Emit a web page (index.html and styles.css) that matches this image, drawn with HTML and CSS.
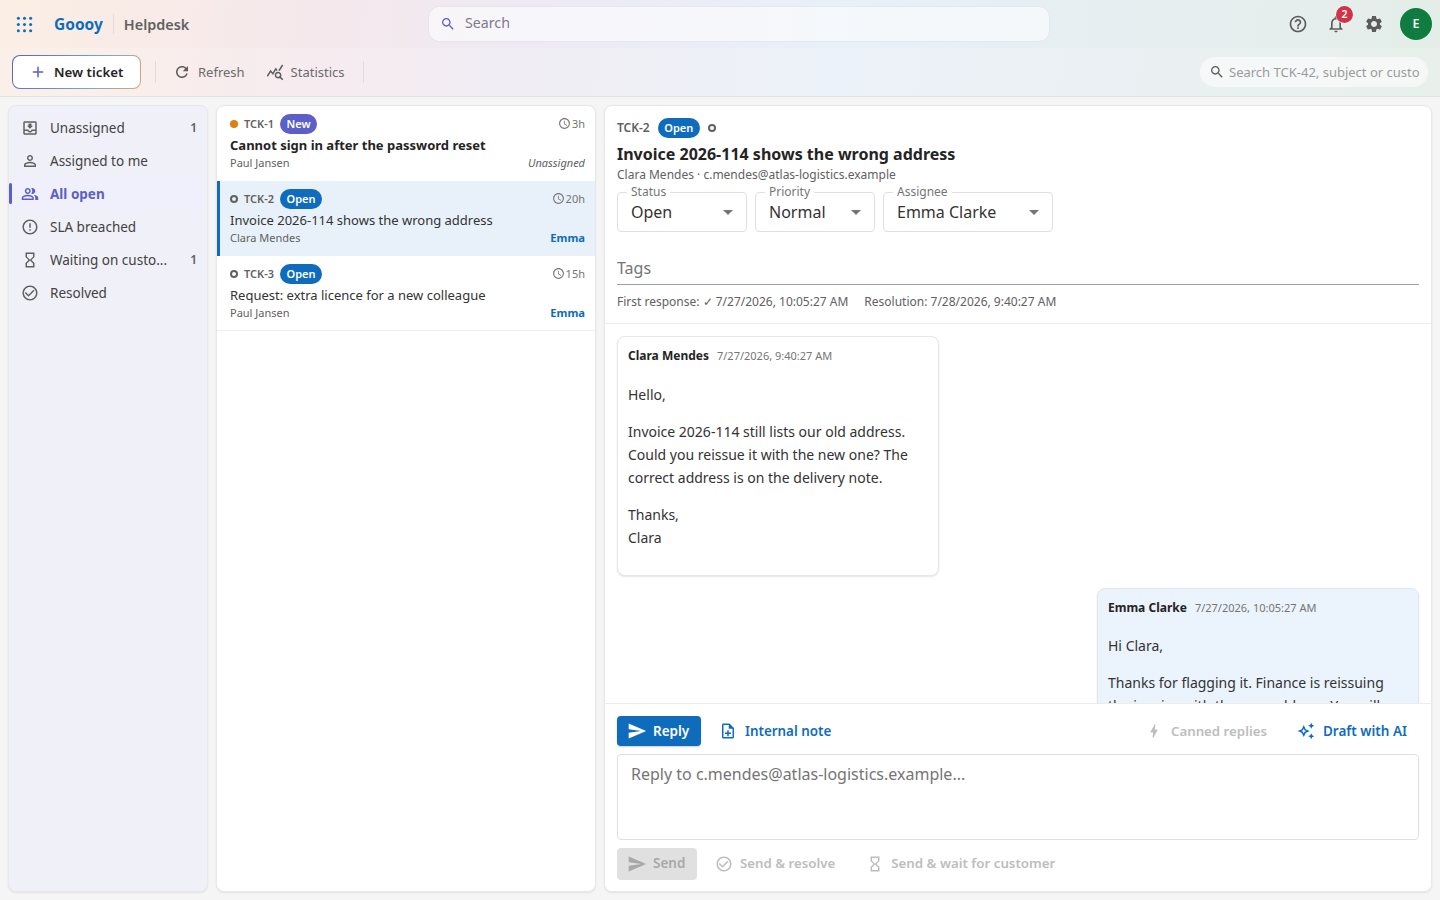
FILE: index.html
```html
<!DOCTYPE html>
<html lang="en">
	<head>
		<title>Helpdesk</title>
		<meta charset="utf-8" />
		<link rel="stylesheet" href="styles.css">
	</head>

	<body>
		<!-- icon set -->
		<svg class="sprite" xmlns="http://www.w3.org/2000/svg">
			<symbol id="i-search" viewBox="0 0 24 24"><path d="M15.5 14h-.79l-.28-.27C15.41 12.59 16 11.11 16 9.5 16 5.91 13.09 3 9.5 3S3 5.91 3 9.5 5.91 16 9.5 16c1.61 0 3.09-.59 4.23-1.57l.27.28v.79l5 4.99L20.49 19l-4.99-5zm-6 0C7.01 14 5 11.99 5 9.5S7.01 5 9.5 5 14 7.01 14 9.5 11.99 14 9.5 14z"/></symbol>
			<symbol id="i-help" viewBox="0 0 24 24"><path d="M11 18h2v-2h-2v2zm1-16C6.48 2 2 6.48 2 12s4.48 10 10 10 10-4.48 10-10S17.52 2 12 2zm0 18c-4.41 0-8-3.59-8-8s3.59-8 8-8 8 3.59 8 8-3.59 8-8 8zm0-14c-2.21 0-4 1.79-4 4h2c0-1.1.9-2 2-2s2 .9 2 2c0 2-3 1.75-3 5h2c0-2.25 3-2.5 3-5 0-2.21-1.79-4-4-4z"/></symbol>
			<symbol id="i-bell" viewBox="0 0 24 24"><path d="M12 22c1.1 0 2-.9 2-2h-4c0 1.1.9 2 2 2zm6-6v-5c0-3.07-1.63-5.64-4.5-6.32V4c0-.83-.67-1.5-1.5-1.5s-1.5.67-1.5 1.5v.68C7.64 5.36 6 7.92 6 11v5l-2 2v1h16v-1l-2-2zm-2 1H8v-6c0-2.48 1.51-4.5 4-4.5s4 2.02 4 4.5v6z"/></symbol>
			<symbol id="i-gear" viewBox="0 0 24 24"><path d="M19.14 12.94c.04-.3.06-.61.06-.94 0-.32-.02-.64-.07-.94l2.03-1.58c.18-.14.23-.41.12-.61l-1.92-3.32c-.12-.22-.37-.29-.59-.22l-2.39.96c-.5-.38-1.03-.7-1.62-.94l-.36-2.54c-.04-.24-.24-.41-.48-.41h-3.84c-.24 0-.43.17-.47.41l-.36 2.54c-.59.24-1.13.57-1.62.94l-2.39-.96c-.22-.08-.47 0-.59.22L2.74 8.87c-.12.21-.08.47.12.61l2.03 1.58c-.05.3-.09.63-.09.94s.02.64.07.94l-2.03 1.58c-.18.14-.23.41-.12.61l1.92 3.32c.12.22.37.29.59.22l2.39-.96c.5.38 1.03.7 1.62.94l.36 2.54c.05.24.24.41.48.41h3.84c.24 0 .44-.17.47-.41l.36-2.54c.59-.24 1.13-.56 1.62-.94l2.39.96c.22.08.47 0 .59-.22l1.92-3.32c.12-.22.07-.47-.12-.61l-2.01-1.58zM12 15.6c-1.98 0-3.6-1.62-3.6-3.6s1.62-3.6 3.6-3.6 3.6 1.62 3.6 3.6-1.62 3.6-3.6 3.6z"/></symbol>
			<symbol id="i-add" viewBox="0 0 24 24"><path d="M19 13h-6v6h-2v-6H5v-2h6V5h2v6h6v2z"/></symbol>
			<symbol id="i-refresh" viewBox="0 0 24 24"><path d="M17.65 6.35C16.2 4.9 14.21 4 12 4c-4.42 0-7.99 3.58-7.99 8s3.57 8 7.99 8c3.73 0 6.84-2.55 7.73-6h-2.08c-.82 2.33-3.04 4-5.65 4-3.31 0-6-2.69-6-6s2.69-6 6-6c1.66 0 3.14.69 4.22 1.78L13 11h7V4l-2.35 2.35z"/></symbol>
			<symbol id="i-stats" viewBox="0 0 24 24"><path d="M19.88 18.47c.44-.7.7-1.51.7-2.39 0-2.49-2.01-4.5-4.5-4.5s-4.5 2.01-4.5 4.5 2.01 4.5 4.49 4.5c.88 0 1.7-.26 2.39-.7L21.58 23 23 21.58l-3.12-3.11zm-3.8.11c-1.38 0-2.5-1.12-2.5-2.5s1.12-2.5 2.5-2.5 2.5 1.12 2.5 2.5-1.12 2.5-2.5 2.5zm-.36-8.5c-.74.02-1.45.18-2.1.45l-.55-.83-3.8 6.18-3.01-3.52-3.63 5.81L1 17l5-8 3 3.5L13 6l2.72 4.08zm2.59.5c-.64-.28-1.33-.45-2.05-.49L21.38 2 23 3.18l-4.69 7.4z"/></symbol>
			<symbol id="i-inbox" viewBox="0 0 24 24"><path d="M19 3H5c-1.1 0-2 .9-2 2v14c0 1.1.9 2 2 2h14c1.1 0 2-.9 2-2V5c0-1.1-.9-2-2-2zm0 16H5v-3h3.56c.69 1.19 1.97 2 3.44 2s2.75-.81 3.44-2H19v3zm0-5h-4.99c0 1.1-.9 2-2 2s-2-.9-2-2H5V5h14v9zm-3-5h-2V6h-4v3H8l4 4 4-4z"/></symbol>
			<symbol id="i-person" viewBox="0 0 24 24"><path d="M12 5.9c1.16 0 2.1.94 2.1 2.1s-.94 2.1-2.1 2.1S9.9 9.16 9.9 8s.94-2.1 2.1-2.1m0 9c2.97 0 6.1 1.46 6.1 2.1v1.1H5.9V17c0-.64 3.13-2.1 6.1-2.1M12 4C9.79 4 8 5.79 8 8s1.79 4 4 4 4-1.79 4-4-1.79-4-4-4zm0 9c-2.67 0-8 1.34-8 4v3h16v-3c0-2.66-5.33-4-8-4z"/></symbol>
			<symbol id="i-people" viewBox="0 0 24 24"><path d="M16.67 13.13C18.04 14.06 19 15.32 19 17v3h4v-3c0-2.18-3.57-3.47-6.33-3.87zM15 12c2.21 0 4-1.79 4-4s-1.79-4-4-4c-.47 0-.91.1-1.33.24C14.5 5.27 15 6.58 15 8s-.5 2.73-1.33 3.76c.42.14.86.24 1.33.24zM9 12c2.21 0 4-1.79 4-4s-1.79-4-4-4-4 1.79-4 4 1.79 4 4 4zm0-6c1.1 0 2 .9 2 2s-.9 2-2 2-2-.9-2-2 .9-2 2-2zm0 7c-2.67 0-8 1.34-8 4v3h16v-3c0-2.66-5.33-4-8-4zm6 5H3v-.99C3.2 16.29 6.3 15 9 15s5.8 1.29 6 2v1z"/></symbol>
			<symbol id="i-error" viewBox="0 0 24 24"><path d="M11 15h2v2h-2zm0-8h2v6h-2zm.99-5C6.47 2 2 6.48 2 12s4.47 10 9.99 10C17.52 22 22 17.52 22 12S17.52 2 11.99 2zM12 20c-4.42 0-8-3.58-8-8s3.58-8 8-8 8 3.58 8 8-3.58 8-8 8z"/></symbol>
			<symbol id="i-hourglass" viewBox="0 0 24 24"><path d="M6 2v6h.01L6 8.01 10 12l-4 4 .01.01H6V22h12v-5.99h-.01L18 16l-4-4 4-3.99-.01-.01H18V2H6zm10 14.5V20H8v-3.5l4-4 4 4zm-4-5l-4-4V4h8v3.5l-4 4z"/></symbol>
			<symbol id="i-check" viewBox="0 0 24 24"><path d="M16.59 7.58 10 14.17l-3.59-3.58L5 12l5 5 8-8zM12 2C6.48 2 2 6.48 2 12s4.48 10 10 10 10-4.48 10-10S17.52 2 12 2zm0 18c-4.42 0-8-3.58-8-8s3.58-8 8-8 8 3.58 8 8-3.58 8-8 8z"/></symbol>
			<symbol id="i-clock" viewBox="0 0 24 24"><path d="M11.99 2C6.47 2 2 6.48 2 12s4.47 10 9.99 10C17.52 22 22 17.52 22 12S17.52 2 11.99 2zM12 20c-4.42 0-8-3.58-8-8s3.58-8 8-8 8 3.58 8 8-3.58 8-8 8zm.5-13H11v6l5.25 3.15.75-1.23-4.5-2.67z"/></symbol>
			<symbol id="i-send" viewBox="0 0 24 24"><path d="M2.01 21 23 12 2.01 3 2 10l15 2-15 2z"/></symbol>
			<symbol id="i-note" viewBox="0 0 24 24"><path d="M13 11h-2v3H8v2h3v3h2v-3h3v-2h-3zm1-9H6c-1.1 0-2 .9-2 2v16c0 1.1.89 2 1.99 2H18c1.1 0 2-.9 2-2V8l-6-6zm4 18H6V4h7v5h5v11z"/></symbol>
			<symbol id="i-bolt" viewBox="0 0 24 24"><path d="M11 21h-1l1-7H7.5c-.58 0-.57-.32-.38-.66.19-.34.05-.08.07-.12C8.48 10.94 10.42 7.54 13 3h1l-1 7h3.5c.49 0 .56.33.47.51l-.07.15C12.96 17.55 11 21 11 21z"/></symbol>
			<symbol id="i-spark" viewBox="0 0 24 24"><path d="M19 9l1.25-2.75L23 5l-2.75-1.25L19 1l-1.25 2.75L15 5l2.75 1.25L19 9zm-7.5.5L9 4 6.5 9.5 1 12l5.5 2.5L9 20l2.5-5.5L17 12l-5.5-2.5zM9.99 12.99 9 15.17l-.99-2.18L5.83 12l2.18-.99L9 8.83l.99 2.18 2.18.99-2.18.99zM19 15l-1.25 2.75L15 19l2.75 1.25L19 23l1.25-2.75L23 19l-2.75-1.25L19 15z"/></symbol>
		</svg>

		<div class="top">
			<!-- app bar -->
			<header class="appbar">
				<div class="brand">
					<svg class="apps" viewBox="0 0 18 18">
						<circle cx="2.5" cy="2.5" r="1.6"/><circle cx="9" cy="2.5" r="1.6"/><circle cx="15.5" cy="2.5" r="1.6"/>
						<circle cx="2.5" cy="9" r="1.6"/><circle cx="9" cy="9" r="1.6"/><circle cx="15.5" cy="9" r="1.6"/>
						<circle cx="2.5" cy="15.5" r="1.6"/><circle cx="9" cy="15.5" r="1.6"/><circle cx="15.5" cy="15.5" r="1.6"/>
					</svg>
					<span class="logo">Goooy</span>
					<span class="product">Helpdesk</span>
				</div>
				<div class="global-search">
					<svg class="ic-18"><use href="#i-search"/></svg>
					<span>Search</span>
				</div>
				<div class="app-actions">
					<svg class="ic-20"><use href="#i-help"/></svg>
					<span class="bell">
						<svg class="ic-20"><use href="#i-bell"/></svg>
						<span class="bell-count">2</span>
					</span>
					<svg class="ic-20"><use href="#i-gear"/></svg>
					<span class="avatar">E</span>
				</div>
			</header>

			<!-- toolbar -->
			<div class="toolbar">
				<button class="new-ticket"><svg class="ic-18"><use href="#i-add"/></svg>New ticket</button>
				<span class="tool-sep"></span>
				<button class="tool"><svg class="ic-18"><use href="#i-refresh"/></svg>Refresh</button>
				<button class="tool"><svg class="ic-18"><use href="#i-stats"/></svg>Statistics</button>
				<span class="tool-sep"></span>
				<div class="ticket-search">
					<svg class="ic-16"><use href="#i-search"/></svg>
					<span>Search TCK-42, subject or custo</span>
				</div>
			</div>
		</div>

		<main class="panes">
			<!-- left nav -->
			<nav class="sidebar">
				<a class="nav-item"><svg class="ic-18"><use href="#i-inbox"/></svg><span class="nav-label">Unassigned</span><span class="nav-count">1</span></a>
				<a class="nav-item"><svg class="ic-18"><use href="#i-person"/></svg><span class="nav-label">Assigned to me</span></a>
				<a class="nav-item active"><svg class="ic-18"><use href="#i-people"/></svg><span class="nav-label">All open</span></a>
				<a class="nav-item"><svg class="ic-18"><use href="#i-error"/></svg><span class="nav-label">SLA breached</span></a>
				<a class="nav-item"><svg class="ic-18"><use href="#i-hourglass"/></svg><span class="nav-label">Waiting on custo...</span><span class="nav-count">1</span></a>
				<a class="nav-item"><svg class="ic-18"><use href="#i-check"/></svg><span class="nav-label">Resolved</span></a>
			</nav>

			<!-- ticket list -->
			<section class="tickets">
				<article class="ticket unread">
					<div class="ticket-top">
						<span class="dot"></span>
						<span class="ticket-id">TCK-1</span>
						<span class="badge badge-new">New</span>
						<span class="age"><svg class="ic-13"><use href="#i-clock"/></svg>3h</span>
					</div>
					<div class="ticket-subject">Cannot sign in after the password reset</div>
					<div class="ticket-bottom"><span>Paul Jansen</span><em>Unassigned</em></div>
				</article>
				<article class="ticket selected">
					<div class="ticket-top">
						<span class="ring"></span>
						<span class="ticket-id">TCK-2</span>
						<span class="badge">Open</span>
						<span class="age"><svg class="ic-13"><use href="#i-clock"/></svg>20h</span>
					</div>
					<div class="ticket-subject">Invoice 2026-114 shows the wrong address</div>
					<div class="ticket-bottom"><span>Clara Mendes</span><b>Emma</b></div>
				</article>
				<article class="ticket">
					<div class="ticket-top">
						<span class="ring"></span>
						<span class="ticket-id">TCK-3</span>
						<span class="badge">Open</span>
						<span class="age"><svg class="ic-13"><use href="#i-clock"/></svg>15h</span>
					</div>
					<div class="ticket-subject">Request: extra licence for a new colleague</div>
					<div class="ticket-bottom"><span>Paul Jansen</span><b>Emma</b></div>
				</article>
			</section>

			<!-- ticket detail -->
			<section class="detail">
				<div class="detail-head">
					<div class="detail-line">
						<span class="detail-id">TCK-2</span>
						<span class="badge">Open</span>
						<span class="ring"></span>
					</div>
					<h1>Invoice 2026-114 shows the wrong address</h1>
					<div class="requester">Clara Mendes · c.mendes@atlas-logistics.example</div>
					<div class="fields">
						<div class="field field-status"><label>Status</label><span>Open</span><i class="caret"></i></div>
						<div class="field field-priority"><label>Priority</label><span>Normal</span><i class="caret"></i></div>
						<div class="field field-assignee"><label>Assignee</label><span>Emma Clarke</span><i class="caret"></i></div>
					</div>
					<div class="tags">Tags</div>
					<div class="sla">
						<span>First response: ✓ 7/27/2026, 10:05:27 AM</span>
						<span>Resolution: 7/28/2026, 9:40:27 AM</span>
					</div>
				</div>

				<div class="messages">
					<div class="msg">
						<div class="msg-head"><b>Clara Mendes</b><span>7/27/2026, 9:40:27 AM</span></div>
						<p>Hello,</p>
						<p>Invoice 2026-114 still lists our old address.<br />Could you reissue it with the new one? The<br />correct address is on the delivery note.</p>
						<p>Thanks,<br />Clara</p>
					</div>
					<div class="msg mine">
						<div class="msg-head"><b>Emma Clarke</b><span>7/27/2026, 10:05:27 AM</span></div>
						<p>Hi Clara,</p>
						<p>Thanks for flagging it. Finance is reissuing<br />the invoice with the new address. You will</p>
					</div>
				</div>

				<div class="composer">
					<div class="compose-tabs">
						<button class="btn-reply"><svg class="ic-20"><use href="#i-send"/></svg>Reply</button>
						<button class="btn-link"><svg class="ic-18"><use href="#i-note"/></svg>Internal note</button>
						<span class="spacer"></span>
						<button class="btn-link muted"><svg class="ic-18"><use href="#i-bolt"/></svg>Canned replies</button>
						<button class="btn-link"><svg class="ic-18"><use href="#i-spark"/></svg>Draft with AI</button>
					</div>
					<div class="reply-box">Reply to c.mendes@atlas-logistics.example...</div>
					<div class="compose-actions">
						<button class="btn-send"><svg class="ic-20"><use href="#i-send"/></svg>Send</button>
						<button class="btn-link muted"><svg class="ic-18"><use href="#i-check"/></svg>Send &amp; resolve</button>
						<button class="btn-link muted"><svg class="ic-18"><use href="#i-hourglass"/></svg>Send &amp; wait for customer</button>
					</div>
				</div>
			</section>
		</main>
	</body>
</html>
```

FILE: styles.css
```css
* {
	box-sizing: border-box;
}
html,
body {
	margin: 0;
	height: 100%;
	overflow: hidden;
}
body {
	background: #f5f5f5;
	color: #242424;
	font-family: "Noto Sans", sans-serif;
	font-size: 14px;
}
button {
	font-family: inherit;
	border: 0;
	background: none;
	padding: 0;
}
svg {
	fill: currentColor;
	flex: none;
}
.sprite {
	display: none;
}
.ic-13 { width: 13px; height: 13px; }
.ic-16 { width: 16px; height: 16px; }
.ic-18 { width: 18px; height: 18px; }
.ic-20 { width: 20px; height: 20px; }

/* top bars share one gradient */
.top {
	height: 97px;
	border-bottom: 1px solid #e2e2e2;
	background: linear-gradient(96deg, #fbeee4 0%, #f5e8ec 22%, #eeeaf3 36%, #e9f0f8 58%, #e6eef0 80%, #e4eee8 100%);
}
.appbar {
	display: flex;
	align-items: center;
	height: 48px;
	padding: 0 8px 0 16px;
}
.brand {
	display: flex;
	align-items: center;
	width: 413px;
}
.apps {
	width: 17px;
	height: 17px;
	margin-right: 21px;
	fill: #0f6cbd;
}
.logo {
	color: #0f6cbd;
	font-size: 15.5px;
	font-weight: 700;
	padding-right: 10px;
	border-right: 1px solid #e3dcdc;
	line-height: 20px;
}
.product {
	color: #616161;
	font-size: 14.4px;
	font-weight: 600;
	margin-left: 10px;
}
.global-search {
	display: flex;
	align-items: center;
	gap: 9px;
	width: 620px;
	height: 34px;
	padding-left: 11px;
	border-radius: 10px;
	background: rgba(255, 255, 255, 0.55);
	box-shadow: 0 0 2px rgba(0, 0, 0, 0.08);
	color: #7b7b8f;
	font-size: 14.2px;
}
.global-search span {
	padding-bottom: 4px;
}
.global-search svg {
	color: #5b5fc7;
	width: 16px;
	height: 16px;
}
.app-actions {
	display: flex;
	align-items: center;
	margin-left: auto;
	color: #5c5c5c;
	gap: 18px;
}
.bell {
	position: relative;
	display: flex;
}
.bell-count {
	position: absolute;
	top: -8px;
	left: 10px;
	width: 17px;
	height: 17px;
	border-radius: 50%;
	background: #d13447;
	box-shadow: 0 0 0 1px rgba(255, 255, 255, 0.6);
	color: #fff;
	font-size: 10.5px;
	font-weight: 600;
	line-height: 17px;
	text-align: center;
}
.avatar {
	width: 32px;
	height: 32px;
	margin-left: -2px;
	border-radius: 50%;
	background: #107c41;
	color: #fff;
	font-size: 12.5px;
	font-weight: 600;
	line-height: 32px;
	text-align: center;
}

.toolbar {
	display: flex;
	align-items: center;
	height: 48px;
	padding: 0 12px;
	background: rgba(255, 255, 255, 0.16);
}
.new-ticket {
	display: flex;
	align-items: center;
	gap: 7px;
	width: 129px;
	height: 34px;
	padding-left: 16px;
	border: 1px solid transparent;
	border-radius: 8px;
	background: linear-gradient(#fff, #fff) padding-box, linear-gradient(120deg, #5b5fc7, #6fa8c7 60%, #d9a777) border-box;
	color: #242424;
	font-size: 13.3px;
	font-weight: 600;
}
.new-ticket svg {
	color: #5b5fc7;
}
.tool-sep {
	width: 1px;
	height: 22px;
	background: #e0dcdc;
	margin-left: 14px;
}
.tool-sep + .tool {
	margin-left: 17px;
}
.tool + .tool-sep {
	margin-left: 18px;
}
.tool {
	display: flex;
	align-items: center;
	gap: 7px;
	color: #6b6b6b;
	font-size: 13px;
}
.tool + .tool {
	margin-left: 21px;
}
.tool svg {
	color: #5c5c5c;
}
.ticket-search {
	display: flex;
	align-items: center;
	gap: 4px;
	width: 228px;
	height: 30px;
	margin-left: auto;
	padding-left: 9px;
	border-radius: 15px;
	background: rgba(255, 255, 255, 0.55);
	color: #9b9b9b;
	font-size: 13px;
	white-space: nowrap;
	overflow: hidden;
}
.ticket-search svg {
	color: #5c5c5c;
}

/* three panes */
.panes {
	display: grid;
	grid-template-columns: 200px 380px 828px;
	gap: 8px;
	height: 803px;
	padding: 8px;
}
.sidebar,
.tickets,
.detail {
	border: 1px solid #e8e8e8;
	border-radius: 8px;
	box-shadow: 0 1px 2px rgba(0, 0, 0, 0.08);
	overflow: hidden;
}

.sidebar {
	padding: 5px 0;
	background: #f0f0f8;
}
.nav-item {
	position: relative;
	display: flex;
	align-items: center;
	height: 33px;
	padding: 0 10px 0 12px;
	color: #424242;
	font-size: 13.5px;
}
.nav-label {
	margin-left: 11px;
	white-space: nowrap;
}
.nav-count {
	margin-left: auto;
	font-size: 12px;
	font-weight: 600;
	color: #616161;
}
.nav-item svg {
	color: #616161;
}
.nav-item.active {
	background: #eff0fb;
	color: #5b5fc7;
	font-weight: 700;
}
.nav-item.active svg {
	color: #5b5fc7;
}
.nav-item.active::before {
	content: "";
	position: absolute;
	left: 0;
	top: 6px;
	width: 3px;
	height: 21px;
	border-radius: 2px;
	background: #5b5fc7;
}

.tickets {
	background: #fff;
}
.ticket {
	height: 75px;
	padding: 7px 10px 0 13px;
	border-bottom: 1px solid #f0f0f0;
}
.ticket.unread,
.ticket.selected {
	border-bottom: 0;
}
.ticket.selected {
	background: #e8f1fa;
	border-left: 3px solid #0f6cbd;
	padding-left: 10px;
}
.ticket-top {
	display: flex;
	align-items: center;
	height: 22px;
}
.dot,
.ring {
	display: inline-block;
	width: 8px;
	height: 8px;
	border-radius: 50%;
}
.dot {
	background: #e07f10;
}
.ring {
	border: 2px solid #616161;
}
.ticket-id {
	margin-left: 6px;
	padding-bottom: 2px;
	color: #616161;
	font-size: 11px;
	font-weight: 600;
}
.badge {
	margin-left: 6px;
	padding: 0 6.5px;
	height: 20px;
	border-radius: 10px;
	background: #0f6cbd;
	color: #fff;
	font-size: 11px;
	font-weight: 600;
	line-height: 20px;
}
.badge-new {
	background: #5b5fc7;
}
.age {
	display: flex;
	align-items: center;
	gap: 1px;
	margin-left: auto;
	padding-bottom: 2px;
	color: #757575;
	font-size: 11px;
}
.ticket-subject {
	margin-top: -1px;
	font-size: 13px;
	line-height: 22px;
	color: #333;
	white-space: nowrap;
}
.unread .ticket-subject {
	font-weight: 700;
	color: #242424;
}
.ticket-bottom {
	display: flex;
	justify-content: space-between;
	color: #616161;
	font-size: 11px;
	line-height: 13px;
}
.ticket-bottom em {
	color: #616161;
	font-size: 11px;
}
.ticket-bottom b {
	color: #0f6cbd;
	font-weight: 700;
	font-size: 11.2px;
}

/* detail pane */
.detail {
	display: flex;
	flex-direction: column;
	background: #fff;
}
.detail-head {
	height: 218px;
	flex: none;
	padding: 11px 12px 0 12px;
	border-bottom: 1px solid #ececec;
}
.detail-line {
	display: flex;
	align-items: center;
	height: 22px;
}
.detail-line .badge {
	padding-bottom: 1px;
	line-height: 19px;
}
.detail-line .ring {
	margin-left: 8px;
}
.detail-id {
	padding-bottom: 2px;
	color: #616161;
	font-size: 12px;
	font-weight: 600;
	margin-right: 2px;
}
h1 {
	margin: 2px 0 0;
	font-size: 16px;
	font-weight: 700;
	line-height: 26px;
	color: #242424;
}
.requester {
	color: #616161;
	font-size: 12px;
	line-height: 15px;
}
.fields {
	display: flex;
	gap: 8px;
	margin-top: 10px;
}
.field {
	position: relative;
	display: flex;
	align-items: center;
	height: 40px;
	padding: 0 13px;
	border: 1px solid #e0e0e0;
	border-radius: 4px;
	font-size: 16px;
	color: #333;
}
.field label {
	position: absolute;
	left: 9px;
	top: -9px;
	padding: 0 4px;
	background: #fff;
	color: #757575;
	font-size: 12px;
	line-height: 16px;
}
.field-status { width: 130px; }
.field-priority { width: 120px; }
.field-assignee { width: 170px; }
.caret {
	margin-left: auto;
	width: 0;
	height: 0;
	border-left: 5px solid transparent;
	border-right: 5px solid transparent;
	border-top: 5px solid #757575;
}
.tags {
	height: 29px;
	margin-top: 24px;
	border-bottom: 1px solid #9e9e9e;
	color: #757575;
	font-size: 16px;
	line-height: 24px;
}
.sla {
	display: flex;
	gap: 16px;
	margin-top: 8px;
	color: #616161;
	font-size: 12px;
	line-height: 17px;
}

.messages {
	flex: 1;
	min-height: 0;
	overflow: hidden;
	padding: 12px 12px 0 12px;
}
.msg {
	width: 322px;
	margin-bottom: 12px;
	padding: 10px 10px 12px;
	border: 1px solid #e6e6e6;
	border-radius: 8px;
	background: #fff;
	box-shadow: 0 1px 2px rgba(0, 0, 0, 0.1);
	font-size: 14px;
	line-height: 23px;
	color: #333;
}
.msg.mine {
	margin-left: auto;
	background: #ebf3fc;
}
.msg.mine .msg-head {
	margin-bottom: 17px;
}
.msg p {
	margin: 14px 0;
}
.msg-head {
	display: flex;
	align-items: baseline;
	gap: 8px;
	line-height: 18px;
	margin-bottom: 18px;
}
.msg-head b {
	font-size: 12px;
	font-weight: 700;
	color: #242424;
}
.msg-head span {
	color: #757575;
	font-size: 11px;
}

.composer {
	flex: none;
	height: 188px;
	padding: 12px 12px 0 12px;
	border-top: 1px solid #ececec;
	background: #fff;
}
.compose-tabs,
.compose-actions {
	display: flex;
	align-items: center;
}
.spacer {
	flex: 1;
}
.btn-reply,
.btn-send {
	display: flex;
	align-items: center;
	gap: 6px;
	height: 30px;
	padding: 0 12px 0 10px;
	border-radius: 4px;
	font-size: 13.5px;
	font-weight: 600;
}
.btn-reply {
	width: 84px;
	padding-bottom: 1px;
	background: #0f6cbd;
	color: #fff;
	box-shadow: 0 1px 2px rgba(0, 0, 0, 0.2);
}
.btn-send {
	width: 80px;
	height: 32px;
	padding-bottom: 2px;
	background: #e0e0e0;
	color: #a8a8a8;
}
.btn-reply svg,
.btn-send svg {
	margin-bottom: -1px;
}
.btn-link {
	display: flex;
	align-items: center;
	gap: 8px;
	margin-left: 18px;
	padding-bottom: 1px;
	color: #0f6cbd;
	font-size: 13.25px;
	font-weight: 600;
}
.btn-link.muted {
	color: #bdbdbd;
}
.compose-tabs .btn-link {
	font-size: 13.4px;
}
.compose-tabs .btn-link.muted {
	font-size: 13.25px;
}
.compose-tabs .btn-link:last-child {
	margin: 0 12px 0 30px;
	font-size: 13.5px;
}
.reply-box {
	height: 86px;
	margin: 8px 0;
	padding: 7px 13px;
	border: 1px solid #e0e0e0;
	border-radius: 4px;
	color: #757575;
	font-size: 16px;
	line-height: 24px;
}
.compose-actions .btn-link {
	gap: 7px;
	padding-bottom: 3px;
	margin-left: 18px;
}
.compose-actions .btn-link svg {
	margin-bottom: -2px;
}
.compose-actions .btn-link + .btn-link {
	margin-left: 31px;
	font-size: 13.3px;
}
```
